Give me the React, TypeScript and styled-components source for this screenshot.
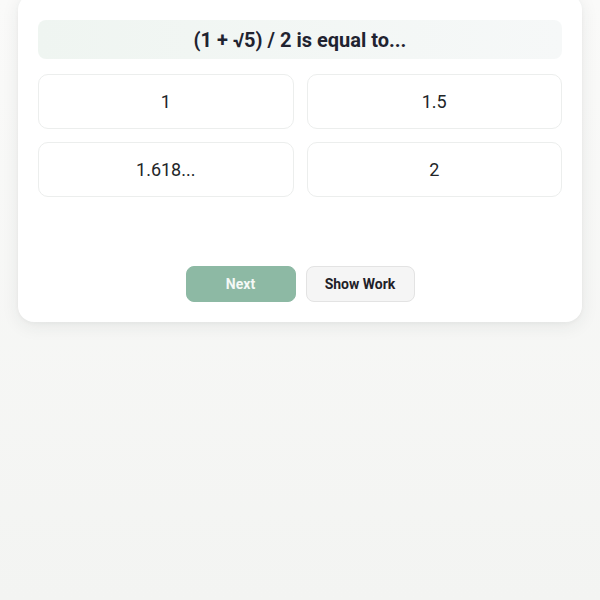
import React from "react";
import styled, { createGlobalStyle } from "styled-components";

const Global = createGlobalStyle`
  html, body {
    margin: 0;
    padding: 0;
    min-height: 100%;
  }
  body {
    background: linear-gradient(180deg, #fafaf9 0%, #f3f4f2 100%);
    min-height: 600px;
    font-family: Roboto, "Liberation Sans", Arial, sans-serif;
    overflow: hidden;
  }
`;

const Page = styled.div`
  padding: 0 18px;
  min-height: 600px;
`;

const Card = styled.div`
  margin-top: -6px;
  background: #ffffff;
  border-radius: 16px;
  box-shadow: 0 4px 18px rgba(40, 50, 45, 0.08), 0 1px 4px rgba(40, 50, 45, 0.04);
  padding: 26px 20px 20px;
  display: flex;
  flex-direction: column;
`;

const Question = styled.div`
  height: 39px;
  border-radius: 8px;
  background: linear-gradient(90deg, #eff5f1 0%, #f6f8f8 100%);
  display: flex;
  align-items: center;
  justify-content: center;
  font-size: 20px;
  font-weight: 700;
  color: #1f2330;
`;

const Options = styled.div`
  margin-top: 15px;
  display: grid;
  grid-template-columns: 1fr 1fr;
  gap: 13px;
`;

const Option = styled.button`
  height: 55px;
  border: 1px solid #eceeed;
  border-radius: 10px;
  background: #ffffff;
  font-family: Roboto, "Liberation Sans", Arial, sans-serif;
  font-size: 18px;
  color: #222528;
  display: flex;
  align-items: center;
  justify-content: center;
  padding: 0;
`;

const Actions = styled.div`
  margin-top: 69px;
  display: flex;
  justify-content: center;
  gap: 10px;
`;

const Button = styled.button<{ $primary?: boolean }>`
  width: ${(p) => (p.$primary ? "110px" : "109px")};
  height: 36px;
  border-radius: 8px;
  font-family: Roboto, "Liberation Sans", Arial, sans-serif;
  font-size: 14px;
  font-weight: 700;
  padding: 0;
  border: 1px solid ${(p) => (p.$primary ? "#8db9a4" : "#e3e3e3")};
  background: ${(p) => (p.$primary ? "#8db9a4" : "#f5f5f5")};
  color: ${(p) => (p.$primary ? "#f4f8f6" : "#1f2128")};
`;

const options = ["1", "1.5", "1.618...", "2"];

export default function App() {
  return (
    <>
      <Global />
      <Page>
        <Card>
          <Question>(1 + √5) / 2 is equal to...</Question>
          <Options>
            {options.map((o) => (
              <Option key={o}>{o}</Option>
            ))}
          </Options>
          <Actions>
            <Button $primary>Next</Button>
            <Button>Show Work</Button>
          </Actions>
        </Card>
      </Page>
    </>
  );
}
